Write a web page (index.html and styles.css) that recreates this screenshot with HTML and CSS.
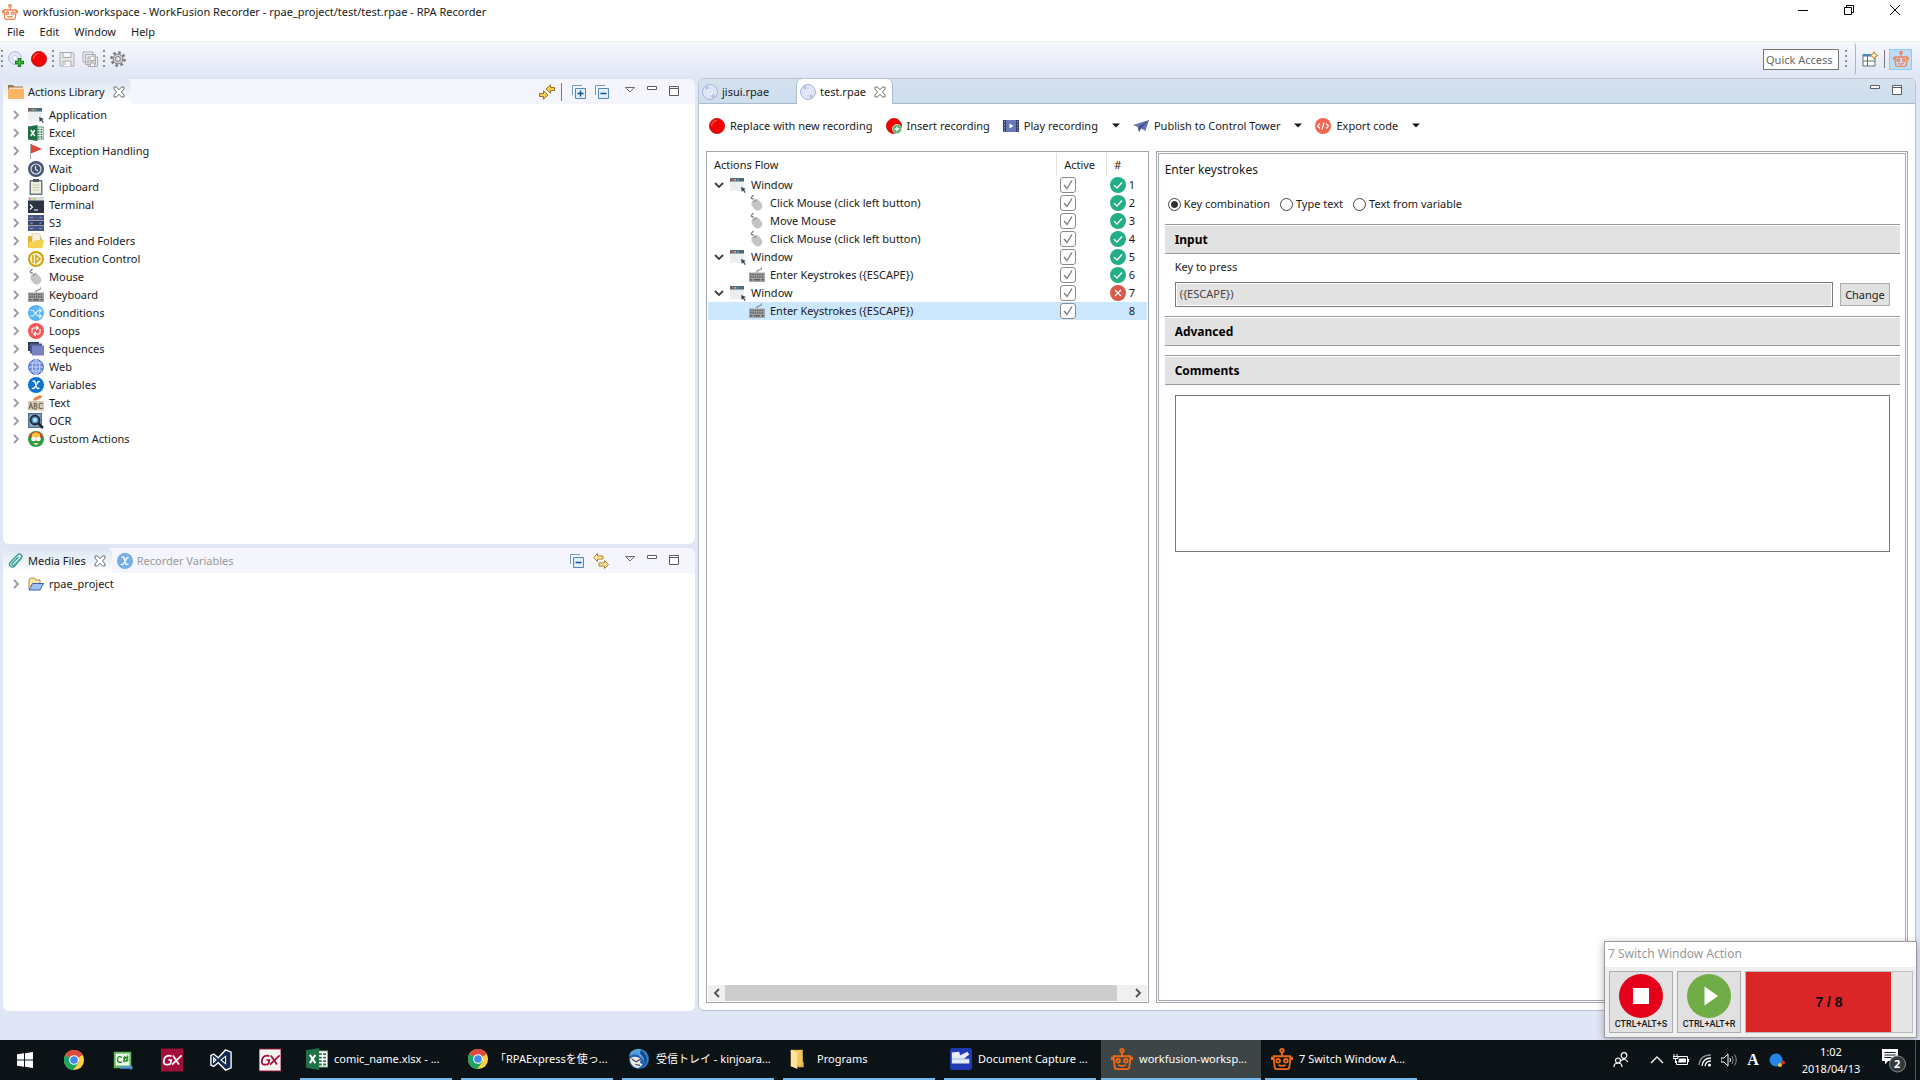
FILE: index.html
```html
<!DOCTYPE html>
<html lang="en">
<head>
<meta charset="utf-8">
<title>workfusion-workspace - WorkFusion Recorder</title>
<link rel="stylesheet" href="styles.css">
</head>
<body>
<svg class="sprite" aria-hidden="true">
  <symbol id="robot" viewBox="0 0 24 24"><g fill="none" stroke="currentColor" stroke-width="2"><circle cx="12" cy="2.800" r="1.900"/><path d="M12 5v4M3 9h18v3l-1 9q-.3 2-2 2H6q-1.700 0-2-2l-1-9zM3 12H1V9.500M21 12h2V9.500"/><circle cx="7.800" cy="14" r="2"/><circle cx="16.200" cy="14" r="2"/><path d="M8 18.500q4 2 8 0"/></g></symbol>
  <symbol id="disc" viewBox="0 0 16 16"><circle cx="8" cy="8" r="7.500" fill="#dfe6f7" stroke="#aab4d8"/><path d="M8 8L2 3.500A7 7 0 0 1 6 1.200zM8 8l6 4.500a7 7 0 0 1-4 2.300z" fill="#b9c3ea"/><circle cx="8" cy="8" r="3.500" fill="#f6f9ff" stroke="#c2cbe6" stroke-width=".7"/><circle cx="8" cy="8" r="1.300" fill="#fff" stroke="#aab4d8" stroke-width=".6"/></symbol>
  <symbol id="discadd" viewBox="0 0 16 16"><circle cx="7" cy="7" r="6.300" fill="#e4eaf8" stroke="#aab4d8"/><circle cx="7" cy="7" r="2.500" fill="#fff" stroke="#c2cbe6"/><path d="M11.500 7v9M7 11.500h9" stroke="#117a1c" stroke-width="3.400"/><path d="M11.500 8v7M8 11.500h7" stroke="#4dbb3c" stroke-width="1.500"/></symbol>
  <symbol id="rec" viewBox="0 0 16 16"><circle cx="8" cy="8" r="7.600" fill="#f40000" stroke="#b81010" stroke-width=".8"/><path d="M2.500 8Q3 3 8 2.500" fill="none" stroke="#ff5a4a" stroke-width="1.200"/></symbol>
  <symbol id="recadd" viewBox="0 0 16 16"><circle cx="8" cy="8" r="7.600" fill="#f40000" stroke="#b81010" stroke-width=".8"/><circle cx="11" cy="11" r="4.500" fill="#4fae68" stroke="#c8ecd0"/><path d="M11 8.500v5M8.500 11h5" stroke="#fff" stroke-width="1.300"/></symbol>
  <symbol id="save" viewBox="0 0 16 16"><path d="M1 1.500h12.500l1.500 1V15H1z" fill="#e8e8ea" stroke="#a9a9ad"/><path d="M4 1.500h8v5H4zM4 15v-5h8v5M6 11v3" fill="#f6f6f6" stroke="#a9a9ad"/></symbol>
  <symbol id="saveall" viewBox="0 0 16 16"><path d="M1 1h10v10H1zM3.500 3.500h10v10h-10zM6 6h9.500v9.500H6z" fill="#ececee" stroke="#adadb1"/><path d="M8 6v3.500h5V6M8.500 15v-3h4v3" fill="#f8f8f8" stroke="#adadb1"/></symbol>
  <symbol id="gear" viewBox="0 0 16 16"><circle cx="8" cy="8" r="6.600" fill="none" stroke="#77777b" stroke-width="2.400" stroke-dasharray="2.600 2.580"/><circle cx="8" cy="8" r="4.900" fill="#d4d4d6" stroke="#77777b"/><circle cx="8" cy="8" r="2.400" fill="#f4f4f8" stroke="#77777b"/></symbol>
  <symbol id="folder" viewBox="0 0 16 16"><path d="M0 1h5l1.500 1.500H15V6H0z" fill="#9a7656"/><path d="M1 3.500h14V6H1z" fill="#efe4d4"/><path d="M0 5h16v9.500q0 .5-1 .5H1q-1 0-1-.5z" fill="#fbb563"/></symbol>
  <symbol id="app" viewBox="0 0 16 16"><path d="M0 4h14v10H0z" fill="#eceff0"/><path d="M0 1h14v3.500H0z" fill="#52667c"/><path d="M2 2.700h1.500" stroke="#f06050" stroke-width="1.500"/><path d="M4.500 2.700H6" stroke="#f2c84b" stroke-width="1.500"/><path d="M7 2.700h1.500" stroke="#53c46a" stroke-width="1.500"/><path d="M11 10l5 2-2 .8 1.700 2.400-1 .8-1.700-2.500-1.200 1.500z" fill="#3b4354"/></symbol>
  <symbol id="excel" viewBox="0 0 16 16"><path d="M8 2h8v12H8z" fill="#fff" stroke="#207245" stroke-width=".8"/><path d="M9.500 4.500h2M12.500 4.500h2M9.500 7h2M12.500 7h2M9.500 9.500h2M12.500 9.500h2M9.500 12h2M12.500 12h2" stroke="#207245" stroke-width="1.300"/><path d="M0 1.600L9.500 0v16L0 14.400z" fill="#1e7145"/><path d="M2.800 5l4 6M6.800 5l-4 6" stroke="#fff" stroke-width="1.500"/></symbol>
  <symbol id="flag" viewBox="0 0 16 16"><path d="M2.500 1v15" stroke="#a8a8a8"/><path d="M3 1l11 5-11 4.500z" fill="#d9483b"/></symbol>
  <symbol id="wait" viewBox="0 0 16 16"><circle cx="8" cy="8" r="8" fill="#46546f"/><circle cx="8" cy="8" r="5" fill="none" stroke="#dce3ee" stroke-width="1.200"/><path d="M7.500 5v3.300l2.500 1.700" fill="none" stroke="#dce3ee" stroke-width="1.200"/></symbol>
  <symbol id="clip" viewBox="0 0 16 16"><path d="M1.500 1h13v15h-13z" fill="#6e7683"/><path d="M3 2.500h10v12H3z" fill="#f0efdf"/><path d="M5 0h6v3H5z" fill="#4f5866"/><path d="M4.500 6h7M4.500 8.500h7M4.500 11h7" stroke="#c9c9b4"/></symbol>
  <symbol id="term" viewBox="0 0 16 16"><path d="M0 0h16v16H0z" fill="#2d3446"/><path d="M0 0h16v3.500H0z" fill="#dcdfe1"/><path d="M1 1.700h1.500" stroke="#e65549" stroke-width="1.500"/><path d="M3.500 1.700H5" stroke="#eec245" stroke-width="1.500"/><path d="M6 1.700h1.500" stroke="#59c068" stroke-width="1.500"/><path d="M2 7.500L4.500 10 2 12.500M6 13h4" fill="none" stroke="#fff" stroke-width="1.200"/></symbol>
  <symbol id="s3" viewBox="0 0 16 16"><path d="M0 0h16v5H0zM0 11h16v5H0z" fill="#4c5788"/><path d="M0 5.500h16v5H0z" fill="#38405f"/><path d="M2 2.500h3M2 8h3M2 13.500h3" stroke="#93a0d4"/><path d="M11.500 2.500h2M11.500 8h2M11.500 13.500h2" stroke="#5bb7d8"/></symbol>
  <symbol id="files" viewBox="0 0 16 16"><path d="M0 3h4l1 2h9v10H0z" fill="#dfae2c"/><path d="M4 0h6l2.500 2.500V10H4z" fill="#f5efdc" stroke="#cdbf92" stroke-width=".7"/><path d="M0 15l1-6.500h5L7.500 7H16l-1.500 8z" fill="#f5d152"/></symbol>
  <symbol id="exec" viewBox="0 0 16 16"><circle cx="8" cy="8" r="7" fill="#f8f3d8" stroke="#cfa30b" stroke-width="2"/><path d="M5 4v8M8 4.500l4 3.500-4 3.500z" fill="#fff" stroke="#cfa30b" stroke-width="1.500"/></symbol>
  <symbol id="mouse" viewBox="0 0 16 16"><path d="M5 4Q1 4 3 1.500L4.500 0" fill="none" stroke="#777" stroke-width="1.200"/><rect x="3.500" y="3.800" width="9" height="12" rx="4.500" transform="rotate(-38 8 10)" fill="#c4c4c4"/><path d="M5 7l2.500-2.500" stroke="#777"/></symbol>
  <symbol id="keys" viewBox="0 0 16 16"><path d="M8 5.500Q7 3 10 3t2.500-2.500" fill="none" stroke="#777"/><path d="M0 5.500h16V15H0z" fill="#a5a5a5"/><path d="M1 7.500h14M1 10h14" stroke="#5c5c5c" stroke-width="1.500" stroke-dasharray="1.500 .8"/><path d="M1 12.700h2.500M5 12.700h6M12.500 12.700H15" stroke="#5c5c5c" stroke-width="1.500"/></symbol>
  <symbol id="cond" viewBox="0 0 16 16"><circle cx="8" cy="8" r="8" fill="#5db4f2"/><path d="M2.500 5.500H5l5 5.500h3M2.500 11H5l5-5.500h3M11 3.500l2.500 2-2.500 2M11 9l2.500 2-2.500 2" fill="none" stroke="#e8f6ff" stroke-width="1.100"/></symbol>
  <symbol id="loops" viewBox="0 0 16 16"><circle cx="8" cy="8" r="8" fill="#f65656"/><path d="M4 10V7q0-2 2-2h4M8 3l2.300 2L8 7M12 6v3q0 2-2 2H6M8 9l-2.300 2L8 13" fill="none" stroke="#fff" stroke-width="1.200"/></symbol>
  <symbol id="seq" viewBox="0 0 16 16"><path d="M0 1h11v9H0z" fill="#353b56"/><path d="M2 2.500h12v10H2z" fill="#4c578a"/><path d="M4 4.500h12v10H4z" fill="#7683c2"/></symbol>
  <symbol id="web" viewBox="0 0 16 16"><circle cx="8" cy="8" r="7.500" fill="#6e8ede" stroke="#4765b8"/><path d="M8 .5v15M.5 8h15M2 4h12M2 12h12" stroke="#dbe5ff" stroke-width=".8"/><ellipse cx="8" cy="8" rx="3.800" ry="7.500" fill="none" stroke="#dbe5ff" stroke-width=".8"/></symbol>
  <symbol id="vars" viewBox="0 0 16 16"><circle cx="8" cy="8" r="8" fill="#0d74d6"/><path d="M4.500 4.500q2-1.500 2.700 1l1.300 4.500q.7 2.500 3 .8M11.800 4.800Q10.500 3.500 9 6.500L7 10q-1.500 2.500-3 1" fill="none" stroke="#fff" stroke-width="1.500"/></symbol>
  <symbol id="text" viewBox="0 0 16 16"><path d="M0 6h16v9.500H0z" fill="#d8ccb4"/><g fill="none" stroke="#716b60" stroke-width="1.100"><path d="M.8 14l2-6 2 6M1.500 12h2.600M6.300 14V8.200h1.500q1.800 1.300 0 2.700H6.300 8q2 1.500 0 3.100zM14.800 9q-3.800-1.800-3.800 2t3.800 2.300"/></g><path d="M5 5.500l1-2.500 6-3 2.500 2L8 5.500z" fill="#ef7b4c"/></symbol>
  <symbol id="ocr" viewBox="0 0 16 16"><path d="M0 0h14v15H0z" fill="#56738f"/><path d="M1.500 1.500h11v12h-11z" fill="#90b5d7"/><circle cx="7" cy="7" r="4.500" fill="#4f8ecb" stroke="#202833" stroke-width="1.800"/><circle cx="7" cy="7" r="2" fill="#cfe6fa"/><path d="M10.500 10.500l4.500 4.500" stroke="#202833" stroke-width="2.500"/></symbol>
  <symbol id="custom" viewBox="0 0 16 16"><circle cx="8" cy="8" r="8" fill="#2d9a3f"/><path d="M1 5a8 8 0 0 1 14 0l-4 3H5z" fill="#d6472d"/><path d="M4 3l4-2 4 2v4l-4 3-4-3z" fill="#f8c23e"/><circle cx="5.500" cy="8" r="2.300" fill="#fff"/><circle cx="10.500" cy="8" r="2.300" fill="#fff"/><path d="M5 12h6l-3 2.500z" fill="#f2e7b3"/></symbol>
  <symbol id="clipper" viewBox="0 0 16 16"><path d="M13.500 5L6.500 13q-2 2-4 .3T2.500 9L9.500 2q2-1.800 3.500-.3t0 3.500L6.500 12q-1.200.8-2 0t0-2L10.500 4" fill="none" stroke="#38a390" stroke-width="1.500"/></symbol>
  <symbol id="openfolder" viewBox="0 0 16 16"><path d="M1 13V4l1.500-2h4L8 4h4v4" fill="#fbe9a8" stroke="#b18a2e"/><path d="M1 14l3.500-6.500h11L12 14z" fill="#9dc3f3" stroke="#3964a8"/></symbol>
  <symbol id="x" viewBox="0 0 12 12"><path d="M1 1h2.500L6 3.800 8.500 1H11v2L8.500 6 11 9v2H8.500L6 8.200 3.500 11H1V9l2.500-3L1 3z" fill="#fff" stroke="#6c6c70"/></symbol>
  <symbol id="linkh" viewBox="0 0 16 16"><path d="M7 5L11.500.8V3.500h4v3h-4v2.700zM9 11L4.500 6.800v2.700h-4v3h4v2.700z" fill="#f7d05a" stroke="#98731c"/></symbol>
  <symbol id="linkv" viewBox="0 0 16 16"><path d="M.5 4.500l4-4V3H10v3H4.500v2.500zM15.500 11.500l-4-4V10H6v3h5.500v2.500z" fill="#fdebb0" stroke="#b5801c"/></symbol>
  <symbol id="expand" viewBox="0 0 14 14"><path d="M.5 10V.5H10" fill="none" stroke="#6f9cc7"/><path d="M3.500 3.500h10v10h-10z" fill="#dff0fb" stroke="#5386b5"/><path d="M5.500 8.500h6M8.500 5.500v6" stroke="#1c4f87" stroke-width="1.400"/></symbol>
  <symbol id="collapse" viewBox="0 0 14 14"><path d="M.5 10V.5H10" fill="none" stroke="#6f9cc7"/><path d="M3.500 3.500h10v10h-10z" fill="#dff0fb" stroke="#5386b5"/><path d="M5.500 8.500h6" stroke="#1c4f87" stroke-width="1.400"/></symbol>
  <symbol id="tri" viewBox="0 0 10 10"><path d="M.5 1.500h9L5 6z" fill="#fff" stroke="#6c6c70"/></symbol>
  <symbol id="min" viewBox="0 0 10 10"><path d="M.5.5h9v3h-9z" fill="#fff" stroke="#5d5d60"/></symbol>
  <symbol id="max" viewBox="0 0 10 10"><path d="M.5.5h9v9h-9zM.5 2.500h9" fill="#fff" stroke="#5d5d60"/></symbol>
  <symbol id="chev" viewBox="0 0 8 10"><path d="M2 1l4 4-4 4" fill="none" stroke="currentColor" stroke-width="1.800"/></symbol>
  <symbol id="chevd" viewBox="0 0 10 8"><path d="M1 2l4 4 4-4" fill="none" stroke="#404040" stroke-width="1.800"/></symbol>
  <symbol id="caret" viewBox="0 0 8 5"><path d="M0 .5h8L4 4.500z" fill="#1a1a1a"/></symbol>
  <symbol id="film" viewBox="0 0 16 16"><path d="M0 2h16v12H0z" fill="#3b4266"/><path d="M3 2h10v12H3z" fill="#6877b8"/><path d="M1.500 3v11M14.500 3v11" stroke="#8c97c9" stroke-dasharray="1.500 1.500"/><path d="M6.500 5.500l4 2.500-4 2.500z" fill="#fff"/></symbol>
  <symbol id="plane" viewBox="0 0 16 16"><path d="M0 7L16 2l-3.500 11L8 10.500 6 14 5 9z" fill="#6674b4"/><path d="M5 9l11-7-8 8.500L6 14z" fill="#434f8a"/></symbol>
  <symbol id="code" viewBox="0 0 16 16"><circle cx="8" cy="8" r="8" fill="#f2654e"/><path d="M5 5.500L2.500 8 5 10.500M11 5.500L13.500 8 11 10.500M9 4.500l-2 7" fill="none" stroke="#fff" stroke-width="1.200"/></symbol>
  <symbol id="ok" viewBox="0 0 16 16"><circle cx="8" cy="8" r="8" fill="#23ae85"/><path d="M4 8.200L7 11l5-5.500" fill="none" stroke="#fff" stroke-width="1.300"/></symbol>
  <symbol id="bad" viewBox="0 0 16 16"><circle cx="8" cy="8" r="8" fill="#d75a4a"/><path d="M5 5l6 6M11 5l-6 6" stroke="#fff" stroke-width="1.200"/></symbol>
  <symbol id="persp" viewBox="0 0 16 16"><path d="M1 3.500h12V15H1z" fill="#fff" stroke="#54786e"/><path d="M1 3h9v2.500H1z" fill="#4187d6"/><path d="M5.500 5v10M5.500 10H13M1 10h4" stroke="#54786e"/><path d="M12 .7l1.200 2.600 2.600 1.200-2.600 1.200L12 8.300l-1.200-2.600-2.600-1.200 2.600-1.200z" fill="#fff6cf" stroke="#b88a24"/></symbol>
  <symbol id="chrome" viewBox="0 0 24 24"><circle cx="12" cy="12" r="11" fill="#ffcd41"/><path d="M12 12L2.500 6.500a11 11 0 0 1 19 0z" fill="#dd4b3e"/><path d="M12 12L2.500 6.500A11 11 0 0 0 11 23l6-8z" fill="#1da362"/><path d="M12 6.500h9.500q-3-5.500-9.500-5.500z" fill="#dd4b3e"/><circle cx="12" cy="12" r="5.300" fill="#fff"/><circle cx="12" cy="12" r="4.200" fill="#4688f1"/></symbol>
  <symbol id="csharp" viewBox="0 0 24 24"><path d="M2 3h19v18H2z" fill="#5ebb53"/><path d="M4 5h15v13H4z" fill="#eef7e8"/><path d="M11 9q-5-2-5 2.500t5 2.500M14 7.500l-1 7M17 7l-1 7M12 10l6-1M12 13l6-1" fill="none" stroke="#23882b" stroke-width="1.400"/><path d="M9 19h11v-2l3 3.500-3 3v-2H9z" fill="#4b8de0"/></symbol>
  <symbol id="gx" viewBox="0 0 24 24"><path d="M0 0h24v24H0z" fill="var(--bg)" stroke="#a30f3c"/><path d="M11.500 8Q9 6.500 6 8t-3 6q.5 3.500 4 3t3.500-1.500l.6-3.500H8M13 7l6.500 10M22.500 7L12 17" fill="none" stroke="var(--fg)" stroke-width="1.900"/></symbol>
  <symbol id="vs" viewBox="0 0 24 24"><path d="M17 1l6 2.500v17L17 23l-8-8-5 4-3-1.500V7l3-1.500 5 4z" fill="#13274f" stroke="#fff" stroke-width="1.500"/><path d="M17 8l-5 4 5 4zM4 9.500v5L6.500 12z" fill="#0b1216" stroke="#fff" stroke-width="1.200"/></symbol>
  <symbol id="bird" viewBox="0 0 24 24"><circle cx="12" cy="12" r="11" fill="#1e64b4"/><path d="M3 4Q13-3 20 6q4 9-3 16 2-8-3-12Q9 4 1 9z" fill="#53a3d8"/><path d="M14 2q9 5 6 15l-3 4q3-10-4-15z" fill="#17498f"/><path d="M2 12q5-5 12 0l-1 4 3 2-5 4Q3 21 2 12z" fill="#f2e9e2"/><path d="M4 12l5 3 5-3M8 18l5 1" fill="none" stroke="#36496a" stroke-width="1.300"/></symbol>
  <symbol id="yfolder" viewBox="0 0 24 24"><path d="M2 2h13v18H2z" fill="#f0c75a"/><path d="M2 2l7 3v18l-7-3z" fill="#ffe69c"/><path d="M14 15h2v6h-7v-2h5z" fill="#e4b23c"/></symbol>
  <symbol id="doccap" viewBox="0 0 24 24"><rect width="24" height="24" rx="3" fill="#1f3ab2"/><path d="M2 5l8-1 1 4 8-4 2 3-6 5h6v5H2z" fill="#e6ecfa"/><path d="M2 12h19" stroke="#9db1e2"/></symbol>
</svg>

<header>
  <div class="titlebar">
    <svg class="i robot"><use href="#robot"/></svg>
    <h1>workfusion-workspace - WorkFusion Recorder - rpae_project/test/test.rpae - RPA Recorder</h1>
    <div class="winbtns">
      <button aria-label="Minimize"><svg viewBox="0 0 10 10"><path d="M0 5.500h10" stroke="#000"/></svg></button>
      <button aria-label="Restore"><svg viewBox="0 0 10 10"><path d="M.5 2.500h7v7h-7zM2.500 2V.5h7v7H8" fill="none" stroke="#000"/></svg></button>
      <button aria-label="Close"><svg viewBox="0 0 10 10"><path d="M0 0l10 10M10 0L0 10" stroke="#000"/></svg></button>
    </div>
  </div>
  <nav class="menubar"><button>File</button><button>Edit</button><button>Window</button><button>Help</button></nav>
  <div class="toolbar">
    <span class="grip"></span>
    <button aria-label="New"><svg class="i"><use href="#discadd"/></svg></button>
    <button aria-label="Record"><svg class="i"><use href="#rec"/></svg></button>
    <span class="grip"></span>
    <button aria-label="Save"><svg class="i"><use href="#save"/></svg></button>
    <button aria-label="Save all"><svg class="i"><use href="#saveall"/></svg></button>
    <span class="grip"></span>
    <button aria-label="Settings"><svg class="i"><use href="#gear"/></svg></button>
    <div class="perspectives">
      <input class="quick" aria-label="Quick Access" placeholder="Quick Access">
      <span class="grip"></span><span class="curve"></span>
      <button aria-label="Open perspective"><svg class="i"><use href="#persp"/></svg></button>
      <span class="sep"></span>
      <button class="on" aria-label="RPA Recorder"><svg class="i robot"><use href="#robot"/></svg></button>
    </div>
  </div>
</header>

<main>
  <div class="side">
    <section class="view">
      <div class="tabs">
        <button class="tab active"><svg class="i"><use href="#folder"/></svg>Actions Library<svg class="x"><use href="#x"/></svg></button>
        <div class="viewtools">
          <svg class="i"><use href="#linkh"/></svg><span class="sep"></span>
          <svg class="m"><use href="#expand"/></svg><svg class="m"><use href="#collapse"/></svg>
          <span class="winicons"><svg class="s"><use href="#tri"/></svg><svg class="s"><use href="#min"/></svg><svg class="s"><use href="#max"/></svg></span>
        </div>
      </div>
      <ul class="tree">
        <li><svg class="c"><use href="#chev"/></svg><svg class="i"><use href="#app"/></svg>Application</li>
        <li><svg class="c"><use href="#chev"/></svg><svg class="i"><use href="#excel"/></svg>Excel</li>
        <li><svg class="c"><use href="#chev"/></svg><svg class="i"><use href="#flag"/></svg>Exception Handling</li>
        <li><svg class="c"><use href="#chev"/></svg><svg class="i"><use href="#wait"/></svg>Wait</li>
        <li><svg class="c"><use href="#chev"/></svg><svg class="i"><use href="#clip"/></svg>Clipboard</li>
        <li><svg class="c"><use href="#chev"/></svg><svg class="i"><use href="#term"/></svg>Terminal</li>
        <li><svg class="c"><use href="#chev"/></svg><svg class="i"><use href="#s3"/></svg>S3</li>
        <li><svg class="c"><use href="#chev"/></svg><svg class="i"><use href="#files"/></svg>Files and Folders</li>
        <li><svg class="c"><use href="#chev"/></svg><svg class="i"><use href="#exec"/></svg>Execution Control</li>
        <li><svg class="c"><use href="#chev"/></svg><svg class="i"><use href="#mouse"/></svg>Mouse</li>
        <li><svg class="c"><use href="#chev"/></svg><svg class="i"><use href="#keys"/></svg>Keyboard</li>
        <li><svg class="c"><use href="#chev"/></svg><svg class="i"><use href="#cond"/></svg>Conditions</li>
        <li><svg class="c"><use href="#chev"/></svg><svg class="i"><use href="#loops"/></svg>Loops</li>
        <li><svg class="c"><use href="#chev"/></svg><svg class="i"><use href="#seq"/></svg>Sequences</li>
        <li><svg class="c"><use href="#chev"/></svg><svg class="i"><use href="#web"/></svg>Web</li>
        <li><svg class="c"><use href="#chev"/></svg><svg class="i"><use href="#vars"/></svg>Variables</li>
        <li><svg class="c"><use href="#chev"/></svg><svg class="i"><use href="#text"/></svg>Text</li>
        <li><svg class="c"><use href="#chev"/></svg><svg class="i"><use href="#ocr"/></svg>OCR</li>
        <li><svg class="c"><use href="#chev"/></svg><svg class="i"><use href="#custom"/></svg>Custom Actions</li>
      </ul>
    </section>
    <section class="view">
      <div class="tabs">
        <button class="tab active"><svg class="i"><use href="#clipper"/></svg>Media Files<svg class="x"><use href="#x"/></svg></button>
        <button class="tab faded"><svg class="i"><use href="#vars"/></svg>Recorder Variables</button>
        <div class="viewtools">
          <svg class="m"><use href="#collapse"/></svg><svg class="i"><use href="#linkv"/></svg>
          <span class="winicons"><svg class="s"><use href="#tri"/></svg><svg class="s"><use href="#min"/></svg><svg class="s"><use href="#max"/></svg></span>
        </div>
      </div>
      <ul class="tree"><li><svg class="c"><use href="#chev"/></svg><svg class="i"><use href="#openfolder"/></svg>rpae_project</li></ul>
    </section>
  </div>

  <section class="editor">
    <div class="tabs">
      <button class="tab idle"><svg class="i"><use href="#disc"/></svg>jisui.rpae</button>
      <button class="tab current"><svg class="i"><use href="#disc"/></svg>test.rpae<svg class="x"><use href="#x"/></svg></button>
      <div class="viewtools"><span class="winicons"><svg class="s"><use href="#min"/></svg><svg class="s"><use href="#max"/></svg></span></div>
    </div>
    <div class="edtools">
      <button><svg class="i"><use href="#rec"/></svg>Replace with new recording</button>
      <button><svg class="i"><use href="#recadd"/></svg>Insert recording</button>
      <button><svg class="i"><use href="#film"/></svg>Play recording<svg class="caret"><use href="#caret"/></svg></button>
      <button><svg class="i"><use href="#plane"/></svg>Publish to Control Tower<svg class="caret"><use href="#caret"/></svg></button>
      <button><svg class="i"><use href="#code"/></svg>Export code<svg class="caret"><use href="#caret"/></svg></button>
    </div>
    <div class="panes">
      <div class="flow">
        <table>
          <thead><tr><th>Actions Flow</th><th class="act">Active</th><th class="num">#</th></tr></thead>
          <tbody>
            <tr><td><div class="cell"><svg class="cd"><use href="#chevd"/></svg><svg class="i"><use href="#app"/></svg>Window</div></td><td><input type="checkbox" checked aria-label="Step 1 active"></td><td><div class="st"><svg class="i"><use href="#ok"/></svg>1</div></td></tr>
            <tr><td><div class="cell kid"><svg class="i"><use href="#mouse"/></svg>Click Mouse (click left button)</div></td><td><input type="checkbox" checked aria-label="Step 2 active"></td><td><div class="st"><svg class="i"><use href="#ok"/></svg>2</div></td></tr>
            <tr><td><div class="cell kid"><svg class="i"><use href="#mouse"/></svg>Move Mouse</div></td><td><input type="checkbox" checked aria-label="Step 3 active"></td><td><div class="st"><svg class="i"><use href="#ok"/></svg>3</div></td></tr>
            <tr><td><div class="cell kid"><svg class="i"><use href="#mouse"/></svg>Click Mouse (click left button)</div></td><td><input type="checkbox" checked aria-label="Step 4 active"></td><td><div class="st"><svg class="i"><use href="#ok"/></svg>4</div></td></tr>
            <tr><td><div class="cell"><svg class="cd"><use href="#chevd"/></svg><svg class="i"><use href="#app"/></svg>Window</div></td><td><input type="checkbox" checked aria-label="Step 5 active"></td><td><div class="st"><svg class="i"><use href="#ok"/></svg>5</div></td></tr>
            <tr><td><div class="cell kid"><svg class="i"><use href="#keys"/></svg>Enter Keystrokes ({ESCAPE})</div></td><td><input type="checkbox" checked aria-label="Step 6 active"></td><td><div class="st"><svg class="i"><use href="#ok"/></svg>6</div></td></tr>
            <tr><td><div class="cell"><svg class="cd"><use href="#chevd"/></svg><svg class="i"><use href="#app"/></svg>Window</div></td><td><input type="checkbox" checked aria-label="Step 7 active"></td><td><div class="st"><svg class="i"><use href="#bad"/></svg>7</div></td></tr>
            <tr class="sel"><td><div class="cell kid"><svg class="i"><use href="#keys"/></svg>Enter Keystrokes ({ESCAPE})</div></td><td><input type="checkbox" checked aria-label="Step 8 active"></td><td><div class="st"><svg class="i"></svg>8</div></td></tr>
          </tbody>
        </table>
        <div class="hscroll">
          <button aria-label="Scroll left"><svg class="c flip"><use href="#chev"/></svg></button>
          <div class="track"><div class="thumb"></div></div>
          <button aria-label="Scroll right"><svg class="c"><use href="#chev"/></svg></button>
        </div>
      </div>
      <form class="detail">
        <div class="inner">
          <h2>Enter keystrokes</h2>
          <div class="radios">
            <label><input type="radio" name="mode" checked>Key combination</label>
            <label><input type="radio" name="mode">Type text</label>
            <label><input type="radio" name="mode">Text from variable</label>
          </div>
          <h3>Input</h3>
          <div class="field">
            <label for="key">Key to press</label>
            <div class="row"><input id="key" value="({ESCAPE})" readonly><button type="button">Change</button></div>
          </div>
          <h3>Advanced</h3>
          <h3 class="spaced"><label for="notes">Comments</label></h3>
          <textarea id="notes"></textarea>
        </div>
      </form>
    </div>
  </section>
</main>

<aside class="popup">
  <h2>7 Switch Window Action</h2>
  <div class="popbody">
    <button><svg viewBox="0 0 44 44"><circle cx="22" cy="22" r="22" fill="#e4001b"/><path d="M14 14h16v16H14z" fill="#fff"/></svg>CTRL+ALT+S</button>
    <button><svg viewBox="0 0 44 44"><circle cx="22" cy="22" r="22" fill="#70ad47"/><path d="M17.500 12.500L31 22 17.500 31.500z" fill="#fff"/></svg>CTRL+ALT+R</button>
    <div class="progress"><div class="bar" style="width:87.5%"></div><span>7 / 8</span></div>
  </div>
</aside>

<footer class="taskbar">
  <button class="pin" aria-label="Start"><svg class="start" viewBox="0 0 16 16"><path d="M0 2.300l7-1v6.200H0zM8 1.200L16 0v7.500H8zM0 8.500h7v6.200l-7-1zM8 8.500h8V16l-8-1.200z" fill="#fff"/></svg></button>
  <button class="pin" aria-label="Chrome"><svg class="t"><use href="#chrome"/></svg></button>
  <button class="pin" aria-label="C#"><svg class="t"><use href="#csharp"/></svg></button>
  <button class="pin gxred" aria-label="GX"><svg class="t"><use href="#gx"/></svg></button>
  <button class="pin" aria-label="Visual Studio"><svg class="t"><use href="#vs"/></svg></button>
  <button class="pin gxwhite" aria-label="GX"><svg class="t"><use href="#gx"/></svg></button>
  <div class="running">
    <button><svg class="t"><use href="#excel"/></svg>comic_name.xlsx - ...</button>
    <button><svg class="t"><use href="#chrome"/></svg>「RPAExpressを使っ...</button>
    <button><svg class="t"><use href="#bird"/></svg>受信トレイ - kinjoara...</button>
    <button><svg class="t"><use href="#yfolder"/></svg>Programs</button>
    <button><svg class="t"><use href="#doccap"/></svg>Document Capture ...</button>
    <button class="front"><svg class="t robot2"><use href="#robot"/></svg>workfusion-worksp...</button>
    <button><svg class="t robot2"><use href="#robot"/></svg>7 Switch Window A...</button>
  </div>
  <div class="tray">
    <svg class="people" viewBox="0 0 16 16"><g fill="none" stroke="#fff" stroke-width="1.200"><circle cx="11" cy="3.500" r="2.800"/><path d="M8 9q3-4 7 1"/><circle cx="5" cy="8.500" r="2.500"/><path d="M1 15q0-4 4-4t4 4"/></g></svg>
    <svg viewBox="0 0 16 16"><path d="M2 11l6-6 6 6" fill="none" stroke="#fff" stroke-width="1.300"/></svg>
    <svg viewBox="0 0 16 16"><path d="M5 4.500h9.500v8H3.500V9M15.500 7v3" fill="none" stroke="#fff"/><path d="M6 6.500h7v4H5z" fill="#fff"/><path d="M1 2v2M4 2v2M0 4.500h5v2H0zM2.500 7v4" fill="none" stroke="#fff"/></svg>
    <svg viewBox="0 0 16 16"><g fill="none" stroke="#8b9297" stroke-width="1.300"><path d="M2 13Q3 3 14 3"/><path d="M5 14q1-8 9-8" stroke="#fff"/><path d="M8 14q1-5 6-5" stroke="#fff"/></g><circle cx="12.500" cy="13" r="1.600" fill="#fff"/></svg>
    <svg viewBox="0 0 16 16"><path d="M0 6h3l4-4v12L3 10H0zM9 6q1 2 0 4" fill="none" stroke="#fff"/><path d="M11 4q2.500 4 0 8M13.500 2.500q3.500 5.500 0 11" fill="none" stroke="#899095"/></svg>
    <b>A</b>
    <svg viewBox="0 0 16 16"><circle cx="7" cy="8" r="6.500" fill="#2286e6"/><circle cx="14" cy="10.500" r="2" fill="#d63427"/><circle cx="11" cy="13" r="2" fill="#f2c52d"/></svg>
    <time class="clock"><span>1:02</span><span>2018/04/13</span></time>
    <button class="notes" aria-label="Notifications"><svg viewBox="0 0 26 26"><path d="M1 2h16v12H7l-3 3.500V14H1z" fill="#fff"/><path d="M3.500 5.500h11M3.500 8h11M3.500 10.500h7" stroke="#11181b"/><circle cx="16.500" cy="17" r="8" fill="#33383b" stroke="#85898c"/></svg><span>2</span></button>
  </div>
</footer>
</body>
</html>
```
FILE: styles.css
```css
* { box-sizing: border-box; }

body {
  margin: 0;
  min-height: 100vh;
  display: flex;
  flex-direction: column;
  background: #e1e6f6;
  color: #1a1a1a;
  font: 11px/16px "Noto Sans", "Noto Sans CJK JP", sans-serif;
}

button, input, textarea { font: inherit; color: inherit; }
button { border: 0; padding: 0; background: none; display: flex; align-items: center; white-space: nowrap; }
h1, h2, h3, ul { margin: 0; padding: 0; font-size: inherit; font-weight: normal; }
svg { flex: none; display: block; }

.sprite { display: none; }
.i { width: 16px; height: 16px; }
.m { width: 14px; height: 14px; }
.x { width: 12px; height: 12px; }
.s { width: 10px; height: 10px; }
.c { width: 8px; height: 10px; color: #9c9c9c; }
.flip { transform: scaleX(-1); }
.robot { color: #f0834f; }
.robot2 { color: #ee6a12; }

/* Title, menu and main toolbar */
header { background: #fff; }
.titlebar { display: flex; height: 23px; align-items: center; padding: 0 2px; gap: 5px; }
.titlebar h1 { flex: 1; }
.winbtns { display: flex; height: 20px; align-self: flex-start; }
.winbtns button { width: 46px; justify-content: center; }
.winbtns svg { width: 10px; height: 10px; }
.menubar { display: flex; height: 18px; padding-left: 7px; gap: 15px; }
.toolbar {
  display: flex;
  align-items: center;
  height: 37px;
  padding: 0 8px 2px 3px;
  gap: 7px;
  border-top: 1px solid #eee;
  background: linear-gradient(#f6f8fd, #e0e5f5);
}
.grip { width: 2px; height: 18px; margin: 0 -2px; background: repeating-linear-gradient(#8f8f8f 0 2px, transparent 2px 5px); }
.perspectives { margin-left: auto; display: flex; align-items: center; gap: 6px; }
.perspectives .grip { margin: 0; }
.quick { width: 76px; height: 21px; border: 1px solid #777; padding: 0 2px; background: #fff; }
.quick::placeholder { color: #666; opacity: 1; }
.curve { width: 3px; height: 32px; border-right: 1px solid #b0b4c2; border-radius: 0 3px 3px 0; }
.sep { width: 1px; height: 18px; background: #777; }
.on { width: 23px; height: 21px; justify-content: center; background: #bcdcfa; border: 1px solid #90c8f6; margin-left: -2px; }

/* Workbench */
main { flex: 1; display: grid; grid-template-columns: 692fr 1218fr; gap: 3px; padding: 0 4px 29px 3px; }
.side { display: grid; grid-template-rows: 465fr 463fr; gap: 4px; padding-top: 1px; }
.view { background: #fff; border-radius: 6px; overflow: hidden; }
.tabs { display: flex; height: 25px; background: #f4f5fd; }
.tab { padding: 0 6px 0 5px; gap: 4px; }
.tab .x { margin-left: 4px; }
.tab.active { background: linear-gradient(#dbe5f2, #fff); border-radius: 6px 6px 0 0; }
.faded { color: #9a9a9a; }
.faded svg { opacity: .55; }
.viewtools { display: flex; align-items: center; margin-left: auto; gap: 9px; padding-right: 16px; }
.viewtools .sep { margin: 0 1px 0 -3px; }
.winicons { display: flex; gap: 12px; margin-left: 7px; height: 12px; }
.tree { list-style: none; padding: 2px 9px; }
.tree li { display: flex; align-items: center; height: 18px; }
.tree .i { margin: 0 5px 0 8px; }

/* Editor */
.editor { display: flex; flex-direction: column; background: #fff; border: 1px solid #bcc2d0; border-radius: 6px; overflow: hidden; }
.editor .tabs { background: linear-gradient(#d4e1ee, #cddeed); border-bottom: 1px solid #a9bccf; }
.editor .tab { padding-left: 3px; padding-top: 1px; }
.editor .viewtools { padding-right: 13px; }
.idle { width: 97px; }
.current { background: #fff; border: solid #a9bccf; border-width: 0 1px; border-radius: 6px 6px 0 0; margin-bottom: -1px; }
.edtools { display: flex; align-items: center; height: 47px; padding: 0 10px 4px; gap: 13px; }
.edtools button { gap: 5px; }
.caret { width: 8px; height: 5px; margin-left: 9px; }
.panes { flex: 1; display: grid; grid-template-columns: 443fr 753fr; gap: 7px; padding: 0 7px 7px; }
.flow { display: flex; flex-direction: column; border: 1px solid #a3a7ae; padding: 1px; }
table { width: 100%; border-collapse: collapse; table-layout: fixed; }
th { height: 23px; padding: 0 7px 0 6px; text-align: left; font-weight: normal; }
th.act, th.num { border-left: 1px solid #e2e2e2; padding: 0 0 0 7px; }
.act { width: 50px; }
.num { width: 40px; }
td { height: 18px; padding: 0 3px; }
.cell, .st { display: flex; align-items: center; gap: 5px; height: 16px; white-space: nowrap; }
.cell { padding-left: 3px; }
.cd { width: 10px; height: 8px; margin-right: 1px; }
.cell.kid { padding-left: 38px; }
.st { gap: 3px; }
.sel { background: #cce8ff; }
input[type="checkbox"] {
  appearance: none;
  display: block;
  width: 16px;
  height: 16px;
  margin: 0;
  border: 1px solid #8b8b8b;
  border-radius: 3px;
  background: #fff;
}
input[type="checkbox"]:checked {
  background: #fff url("data:image/svg+xml,%3Csvg xmlns='http://www.w3.org/2000/svg' viewBox='0 0 14 14'%3E%3Cpath d='M3 7L6 10.500l5-8' fill='none' stroke='%23777' stroke-width='1.300'/%3E%3C/svg%3E");
}
.hscroll { display: flex; margin-top: auto; height: 16px; background: #f0f0f0; }
.hscroll button { width: 17px; justify-content: center; }
.hscroll .c { color: #505050; }
.track { flex: 1; }
.thumb { width: 97%; height: 100%; background: #cdcdcd; }

.detail { display: flex; border: 1px solid #a3a7ae; padding: 1px; }
.inner { flex: 1; border: 1px solid #a3a7ae; padding: 8px 5px 8px 6px; }
.inner h2 { font-size: 12px; }
.radios { display: flex; gap: 10px; margin: 18px 0 12px 3px; }
.radios label { display: flex; align-items: center; gap: 3px; }
input[type="radio"] { appearance: none; width: 13px; height: 13px; margin: 0; border: 1px solid #444; border-radius: 50%; background: #fff; }
input[type="radio"]:checked { background: radial-gradient(#333 0 3px, #fff 4px); }
.inner h3 {
  height: 30px;
  padding: 0 10px;
  border: solid #9a9a9a;
  border-width: 1px 0;
  background: #e2e2e2;
  box-shadow: inset 0 1px #fff;
  font-size: 12px;
  line-height: 29px;
  font-weight: bold;
  color: #000;
}
.field { padding: 5px 10px 9px; }
.row { display: flex; align-items: center; gap: 7px; margin-top: 7px; }
.row input { flex: 1; height: 25px; border: 1px solid #7a7a7a; box-shadow: inset 0 0 0 1px #fff; padding: 0 4px 3px; background: #e2e2e2; color: #444; }
.row button { height: 23px; width: 50px; justify-content: center; background: #e1e1e1; border: 1px solid #adadad; }
.inner .spaced { margin-top: 9px; }
textarea { display: block; width: calc(100% - 20px); height: 157px; margin: 10px 10px 0; border: 1px solid #7a7a7a; resize: none; background: #fff; }

/* Playback window floating above the workbench */
.popup {
  position: absolute;
  right: 3px;
  bottom: 42px;
  width: 313px;
  background: #f0f0f0;
  border: 1px solid #9b9b9b;
  box-shadow: 0 2px 8px rgba(0, 0, 0, .3);
}
.popup h2 { height: 25px; padding: 0 3px; line-height: 24px; background: #fff; color: #999; font-size: 12px; }
.popbody { display: flex; gap: 4px; height: 70px; padding: 4px 3px 4px 4px; }
.popbody button {
  width: 64px;
  flex-direction: column;
  justify-content: center;
  background: #e1e1e1;
  border: 1px solid #adadad;
  font: 500 9px/12px Roboto, sans-serif;
}
.popbody button svg { width: 44px; height: 44px; }
.progress { flex: 1; display: grid; background: #e6e6e6; border: 1px solid #bcbcbc; }
.progress > * { grid-area: 1 / 1; }
.bar { background: #da2626; }
.progress span { place-self: center; font: bold 14px/16px "Liberation Sans", sans-serif; color: #111; }

/* Taskbar */
.taskbar { display: flex; height: 40px; background: #0c1316; color: #fff; }
.pin { width: 49px; justify-content: center; }
.t { width: 22px; height: 24px; }
.start { width: 16px; height: 16px; }
.gxred { --bg: #a30f3c; --fg: #fff; }
.gxwhite { --bg: #f4f1f1; --fg: #a30f3c; }
.running { display: flex; gap: 9px; margin-left: 6px; }
.running button { width: 152px; padding-left: 6px; gap: 6px; border-bottom: 2px solid #76b9ed; }
.running .front { width: 160px; padding-left: 10px; margin: 0 -5px 0 -4px; background: #3e4547; }
.tray { display: flex; align-items: center; margin-left: auto; gap: 8px; padding-right: 4px; border-right: 1px solid #51575a; margin-right: 4px; }
.tray svg { width: 16px; height: 16px; }
.tray .people { margin-right: 12px; }
.tray b { width: 16px; text-align: center; font: bold 16px/16px "Liberation Serif", serif; }
.clock { display: flex; flex-direction: column; width: 76px; text-align: center; line-height: 17px; }
.tray .notes { position: relative; width: 34px; height: 26px; justify-content: center; }
.tray .notes svg { width: 26px; height: 26px; }
.notes span { position: absolute; left: 17px; top: 9px; font-weight: bold; }
```
